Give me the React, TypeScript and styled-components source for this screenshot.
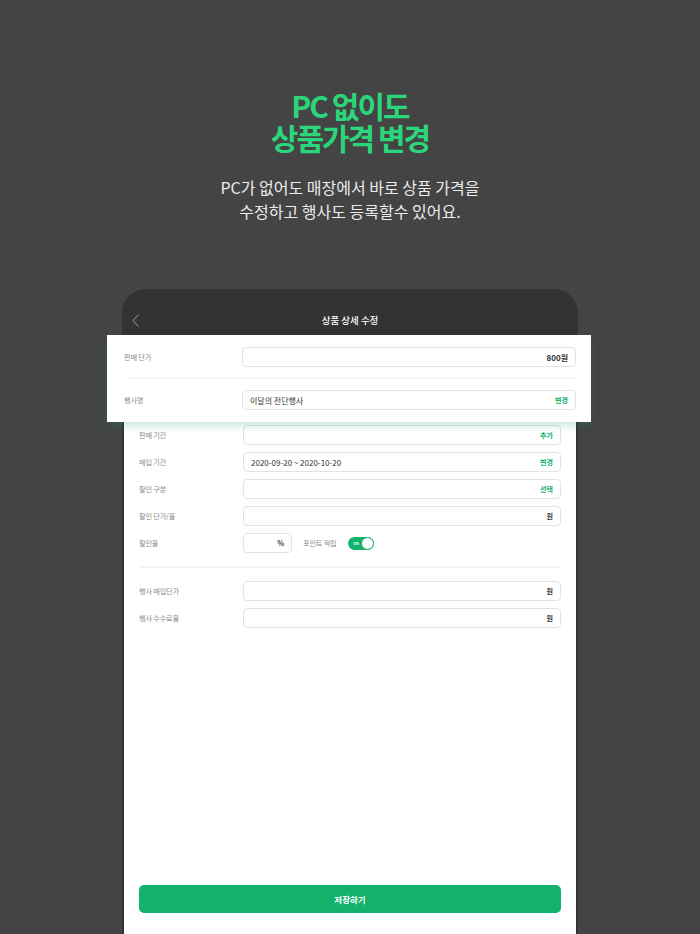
import React from 'react'
import styled, { createGlobalStyle } from 'styled-components'

const GlobalStyle = createGlobalStyle`
    html, body {
        margin: 0;
        padding: 0;
        background: #444444;
    }
    body {
        font-family: "Noto Sans CJK KR", "Noto Sans", sans-serif;
    }
`

const Page = styled.div`
    width: 700px;
    height: 934px;
    overflow: hidden;
    background: #444444;
    display: flex;
    flex-direction: column;
    align-items: center;
    padding-top: 89px;
    box-sizing: border-box;
`

const Title = styled.h1`
    margin: 0;
    color: #2bd67b;
    font-size: 30px;
    line-height: 32px;
    font-weight: 700;
    letter-spacing: -2px;
    text-align: center;
`

const Subtitle = styled.p`
    margin: 22px 0 0;
    color: #ececec;
    font-size: 16px;
    line-height: 24px;
    font-weight: 400;
    letter-spacing: 0;
    text-align: center;
`

const Phone = styled.div`
    margin-top: 66px;
    width: 456px;
    flex: 1;
    background: #333333;
    border-radius: 24px 24px 0 0;
    padding: 0 2px;
    box-sizing: border-box;
    display: flex;
    flex-direction: column;
`

const Header = styled.div`
    height: 46px;
    flex-shrink: 0;
    display: flex;
    align-items: center;
    justify-content: center;
    position: relative;
    padding-top: 16px;
    box-sizing: border-box;
`

const HeaderTitle = styled.span`
    color: #ffffff;
    font-size: 9.5px;
    font-weight: 500;
`

const BackButton = styled.svg`
    position: absolute;
    left: 8px;
    top: 25px;
`

const Screen = styled.div`
    flex: 1;
    background: #ffffff;
    display: flex;
    flex-direction: column;
    padding: 3px 15px 21px;
`

const Row = styled.div<{ $label?: number }>`
    display: grid;
    grid-template-columns: ${p => p.$label ?? 104}px 1fr;
    align-items: center;
    margin-bottom: 7px;
`

const Label = styled.span`
    font-size: 7.2px;
    color: #8a8a8a;
    letter-spacing: -0.2px;
`

const Field = styled.div<{ $width?: number }>`
    height: 20px;
    box-sizing: border-box;
    border: 1px solid #e3e3e3;
    border-radius: 4px;
    background: #ffffff;
    display: flex;
    align-items: center;
    justify-content: space-between;
    padding: 0 7px;
    width: ${p => (p.$width ? `${p.$width}px` : 'auto')};
`

const Value = styled.span`
    font-size: 8px;
    color: #333333;
`

const Unit = styled.span`
    margin-left: auto;
    font-size: 7px;
    font-weight: 700;
    color: #333333;
`

const Action = styled.span`
    margin-left: auto;
    font-size: 7px;
    font-weight: 700;
    color: #12b26c;
`

const Inline = styled.div`
    display: flex;
    align-items: center;
`

const SubLabel = styled(Label)`
    margin-left: 11px;
    margin-right: 12px;
`

const Toggle = styled.div`
    width: 26px;
    height: 13px;
    border-radius: 7px;
    background: #12b26c;
    position: relative;
    display: flex;
    align-items: center;
    padding-left: 5px;
    box-sizing: border-box;
    font-size: 3.5px;
    font-weight: 700;
    color: #ffffff;
`

const Knob = styled.span`
    position: absolute;
    right: 0;
    top: 0;
    width: 13px;
    height: 13px;
    box-sizing: border-box;
    border-radius: 50%;
    background: #ffffff;
    border: 1px solid #12b26c;
`

const Divider = styled.hr`
    border: none;
    height: 2px;
    background: #f4f4f4;
    margin: 6px 0 13px;
`

const SaveButton = styled.button`
    margin-top: auto;
    height: 28px;
    border: none;
    border-radius: 5px;
    background: #12b26c;
    color: #ffffff;
    font-family: "Noto Sans CJK KR", "Noto Sans", sans-serif;
    font-size: 8.5px;
    font-weight: 700;
`

const Popup = styled.div`
    position: relative;
    z-index: 1;
    margin: 0 -15px 0 -17px;
    background: #ffffff;
    padding: 12px 15px 12px 17px;
    box-shadow: 0 4px 8px rgba(18, 150, 90, 0.22);
`

const PopupRow = styled(Row)`
    margin-bottom: 0;
`

const PopupDivider = styled.hr`
    border: none;
    height: 1px;
    background: #f3f3f3;
    margin: 11px 0 11px;
`

const PopupValue = styled.span`
    margin-left: auto;
    font-size: 8px;
    font-weight: 700;
    color: #333333;
`

const App = () => {
    return (
        <>
            <GlobalStyle />
            <Page>
                <Title>
                    PC 없이도
                    <br />
                    상품가격 변경
                </Title>
                <Subtitle>
                    PC가 없어도 매장에서 바로 상품 가격을
                    <br />
                    수정하고 행사도 등록할수 있어요.
                </Subtitle>
                <Phone>
                    <Header>
                        <BackButton width="8" height="13" viewBox="0 0 8 13">
                            <polyline points="6.5,0.5 1,6.5 6.5,12.5" fill="none" stroke="#a0a0a0" strokeWidth="1" />
                        </BackButton>
                        <HeaderTitle>상품 상세 수정</HeaderTitle>
                    </Header>
                    <Popup>
                        <PopupRow $label={118}>
                            <Label>판매 단가</Label>
                            <Field><PopupValue>800원</PopupValue></Field>
                        </PopupRow>
                        <PopupDivider />
                        <PopupRow $label={118}>
                            <Label>행사명</Label>
                            <Field><Value>이달의 전단행사</Value><Action>변경</Action></Field>
                        </PopupRow>
                    </Popup>
                    <Screen>
                        <Row>
                            <Label>판매 기간</Label>
                            <Field><Action>추가</Action></Field>
                        </Row>
                        <Row>
                            <Label>매입 기간</Label>
                            <Field><Value>2020-09-20 ~ 2020-10-20</Value><Action>변경</Action></Field>
                        </Row>
                        <Row>
                            <Label>할인 구분</Label>
                            <Field><Action>선택</Action></Field>
                        </Row>
                        <Row>
                            <Label>할인 단가/율</Label>
                            <Field><Unit>원</Unit></Field>
                        </Row>
                        <Row>
                            <Label>할인율</Label>
                            <Inline>
                                <Field $width={49}><Unit>%</Unit></Field>
                                <SubLabel>포인트 적립</SubLabel>
                                <Toggle>ON<Knob /></Toggle>
                            </Inline>
                        </Row>
                        <Divider />
                        <Row>
                            <Label>행사 매입단가</Label>
                            <Field><Unit>원</Unit></Field>
                        </Row>
                        <Row>
                            <Label>행사 수수료율</Label>
                            <Field><Unit>원</Unit></Field>
                        </Row>
                        <SaveButton>저장하기</SaveButton>
                    </Screen>
                </Phone>
            </Page>
        </>
    )
}

export default App
